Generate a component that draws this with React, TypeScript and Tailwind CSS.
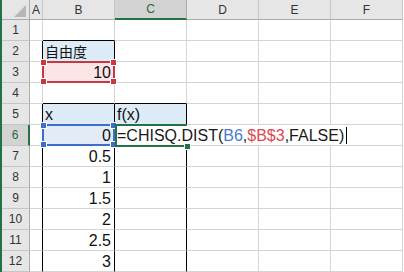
import React from 'react';

const FONT = { fontFamily: '"Liberation Sans", "Noto Sans CJK JP", sans-serif' };

const COLS = ['A', 'B', 'C', 'D', 'E', 'F'];
const ROWS = [1, 2, 3, 4, 5, 6, 7, 8, 9, 10, 11, 12];

type Cell = { text?: string; align?: 'left' | 'right'; bg?: string; jp?: boolean };

const CELLS: Record<string, Cell> = {
  B2: { text: '自由度', align: 'left', bg: 'bg-[#ddebf7]', jp: true },
  B3: { text: '10', align: 'right', bg: 'bg-[#fae4e5]' },
  B5: { text: 'x', align: 'left', bg: 'bg-[#ddebf7]' },
  C5: { text: 'f(x)', align: 'left', bg: 'bg-[#ddebf7]' },
  B6: { text: '0', align: 'right', bg: 'bg-[#e3ebf6]' },
  B7: { text: '0.5', align: 'right' },
  B8: { text: '1', align: 'right' },
  B9: { text: '1.5', align: 'right' },
  B10: { text: '2', align: 'right' },
  B11: { text: '2.5', align: 'right' },
  B12: { text: '3', align: 'right' },
};

// cells whose right / bottom edge carries the black table border
const BLACK_RIGHT = new Set(['A2', 'A3', 'B2', 'B3', ...[5, 6, 7, 8, 9, 10, 11, 12].flatMap(r => [`A${r}`, `B${r}`, `C${r}`])]);
const BLACK_BOTTOM = new Set(['B1', 'B4', 'C4']);

const Handle = ({ pos, color }: { pos: string; color: string }) => (
  <div className={`absolute w-[5px] h-[5px] outline outline-1 outline-white ${color} ${pos}`} />
);

const RangeBox = ({ border, fill }: { border: string; fill: string }) => (
  <div className={`absolute -left-px -top-px w-[73px] h-[22px] border-2 z-10 ${border}`}>
    <Handle pos="-left-[3px] -top-[3px]" color={fill} />
    <Handle pos="-right-[3px] -top-[3px]" color={fill} />
    <Handle pos="-left-[3px] -bottom-[3px]" color={fill} />
    <Handle pos="-right-[3px] -bottom-[3px]" color={fill} />
  </div>
);

const ActiveEditor = () => (
  <>
    <div className="absolute left-0 -top-px w-[72px] h-[23px] border-t-2 border-b-2 border-l-2 border-[#217346] z-20" />
    <div className="absolute left-[70px] top-[19px] w-[5px] h-[5px] bg-[#217346] outline outline-1 outline-white z-30" />
    <div className="absolute left-[2px] top-0 h-[20px] w-[236px] bg-white z-10 flex items-end text-[16px] leading-[18px] text-[#1a1a1a] whitespace-nowrap">
      <span>=CHISQ.DIST(</span>
      <span className="text-[#4a7bd0]">B6</span>
      <span>,</span>
      <span className="text-[#e0474c]">$B$3</span>
      <span>,FALSE)</span>
      <span className="inline-block w-px h-[17px] bg-black ml-[2px] mb-px" />
    </div>
  </>
);

const GridCell = ({ col, row }: { col: string; row: number }) => {
  const id = `${col}${row}`;
  const cell = CELLS[id];
  const right = BLACK_RIGHT.has(id) ? 'border-r-black' : 'border-r-[#d4d4d4]';
  const bottom = BLACK_BOTTOM.has(id) ? 'border-b-black' : 'border-b-[#d4d4d4]';
  return (
    <div className={`relative border-r border-b ${right} ${bottom} ${cell?.bg ?? 'bg-white'} flex items-end ${cell?.align === 'right' ? 'justify-end pr-[3px]' : 'justify-start pl-[2px]'}`}>
      {cell?.text && (
        <span className={cell.jp ? 'text-[14px] leading-[18px] text-[#111]' : 'text-[16px] leading-[18px] text-[#111]'}>{cell.text}</span>
      )}
      {id === 'B3' && <RangeBox border="border-[#c8393f]" fill="bg-[#c8393f]" />}
      {id === 'B6' && <RangeBox border="border-[#3d6fc8]" fill="bg-[#3d6fc8]" />}
      {id === 'C6' && <ActiveEditor />}
    </div>
  );
};

const App = () => {
  return (
    <div className="w-[404px] h-[272px] overflow-hidden bg-white flex" style={FONT}>
      <div className="w-[2px] h-full bg-[#217346] shrink-0" />
      <div className="grid grid-cols-[28px_13px_72px_72px_72px_72px_72px] grid-rows-[20px_repeat(12,21px)] shrink-0">
        {/* corner */}
        <div className="relative bg-[#e6e6e6] border-r border-b border-[#ababab]">
          <svg width="28" height="20" className="absolute left-0 top-0">
            <polygon points="24,5 24,17 12,17" fill="#b7b7b7" />
          </svg>
        </div>
        {COLS.map(c => (
          <div
            key={c}
            className={`flex items-center justify-center text-[12px] ${
              c === 'C'
                ? 'bg-[#d3d3d3] text-[#1e6b41] border-b-2 border-b-[#217346] border-r border-r-[#ababab]'
                : 'bg-[#e6e6e6] text-[#333] border-b border-b-[#ababab] border-r border-r-[#c6c6c6]'
            }`}
          >
            {c}
          </div>
        ))}
        {ROWS.map(r => (
          <React.Fragment key={r}>
            <div
              className={`flex items-center justify-center text-[12px] border-b border-b-[#c6c6c6] ${
                r === 6
                  ? 'bg-[#d3d3d3] text-[#1e6b41] border-r-2 border-r-[#217346]'
                  : 'bg-[#e6e6e6] text-[#333] border-r border-r-[#ababab]'
              }`}
            >
              {r}
            </div>
            {COLS.map(c => (
              <GridCell key={c} col={c} row={r} />
            ))}
          </React.Fragment>
        ))}
      </div>
    </div>
  );
};

export default App;
